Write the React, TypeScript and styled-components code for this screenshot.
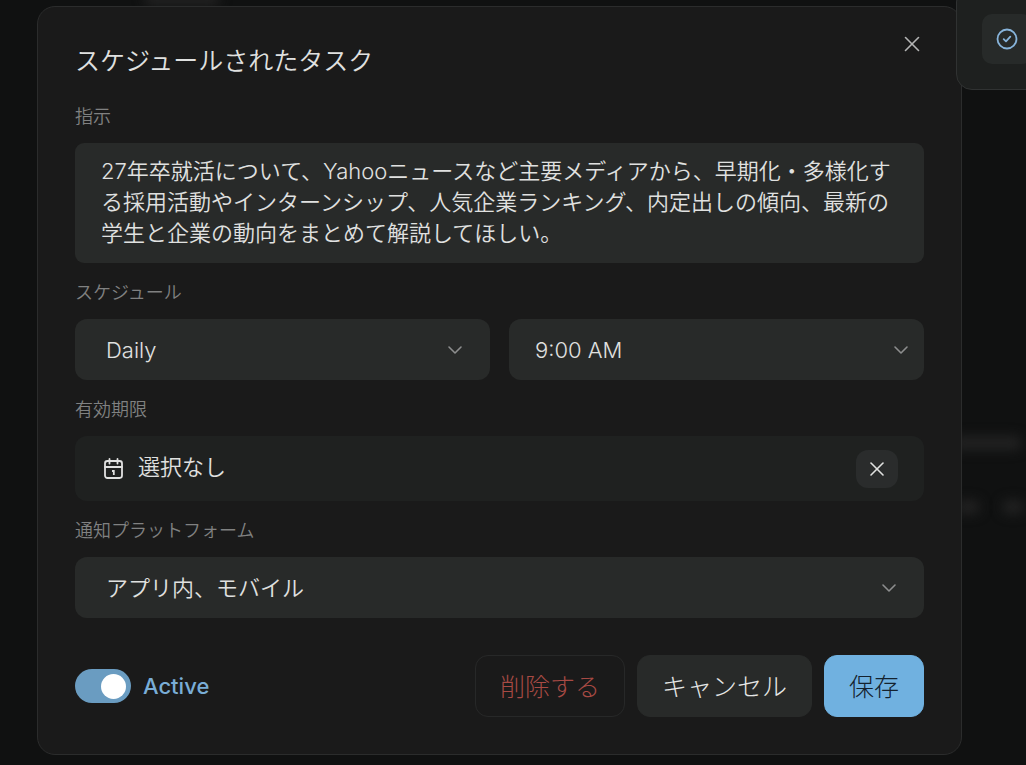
import React, { useState } from "react";
import styled, { createGlobalStyle } from "styled-components";
import { ChevronDown, X } from "lucide-react";

const GlobalStyle = createGlobalStyle`
  *, *::before, *::after { box-sizing: border-box; }
  body {
    margin: 0;
    background: #101111;
    color: #e0e1e0;
    font-family: Inter, "Noto Sans CJK JP", sans-serif;
    font-size: 22px;
    font-weight: 350;
  }
  button, select, textarea, input { font: inherit; color: inherit; }
`;

const Page = styled.div`
  position: relative;
  min-height: 100vh;
  overflow: hidden;
  padding: 6px 64px 10px 37px;
`;

const Ghost = styled.div<{ $top: number; $right: number; $width: number }>`
  position: absolute;
  top: ${(p) => p.$top}px;
  right: ${(p) => p.$right}px;
  width: ${(p) => p.$width}px;
  height: 14px;
  border-radius: 7px;
  background: #222222;
  filter: blur(6px);
`;

const Dialog = styled.form`
  position: relative;
  padding: 36px 37px 37px;
  border: 1px solid #2b2c2c;
  border-radius: 18px;
  background: #1a1a1a;
`;

const Header = styled.header`
  display: flex;
  align-items: flex-start;
  justify-content: space-between;
  margin-bottom: 24px;
`;

const Title = styled.h1`
  margin: 0;
  font-size: 25px;
  font-weight: 350;
  line-height: 36px;
`;

const CloseButton = styled.button`
  display: grid;
  place-items: center;
  width: 32px;
  height: 32px;
  margin: -15px -4px 0 0;
  padding: 0;
  border: 0;
  background: none;
  color: #b4b5b5;
`;

const Fields = styled.div`
  display: grid;
  gap: 16px;
`;

const Field = styled.div`
  display: grid;
  gap: 12px;
`;

const Label = styled.label`
  color: #808181;
  font-size: 18px;
  line-height: 28px;
`;

const Instructions = styled.textarea`
  display: block;
  width: 100%;
  height: 120px;
  padding: 13px 26px;
  border: 0;
  border-radius: 9px;
  outline: 0;
  resize: none;
  overflow: hidden;
  background: #282a29;
  line-height: 31px;
`;

const Columns = styled.div`
  display: grid;
  grid-template-columns: 1fr 1fr;
  gap: 19px;
`;

const SelectBox = styled.div<{ $inset: number; $iconInset: number }>`
  display: grid;
  grid-template-columns: 1fr auto;
  align-items: center;

  select {
    grid-area: 1 / 1 / 2 / 3;
    width: 100%;
    height: 61px;
    padding: 0 ${(p) => p.$inset}px;
    border: 0;
    border-radius: 12px;
    outline: 0;
    appearance: none;
    background: #282a29;
  }

  svg {
    grid-area: 1 / 2;
    margin-right: ${(p) => p.$iconInset}px;
    color: #8d8e8e;
    pointer-events: none;
  }
`;

const DateBox = styled.div`
  display: flex;
  align-items: center;
  justify-content: space-between;
  height: 65px;
  padding: 0 26px 0 29px;
  border-radius: 12px;
  background: #1f2120;
`;

const DateButton = styled.button`
  display: flex;
  align-items: center;
  gap: 15px;
  padding: 0;
  border: 0;
  background: none;
  line-height: 30px;

  span {
    padding-bottom: 3px;
  }
`;

const ClearButton = styled.button`
  display: grid;
  place-items: center;
  width: 42px;
  height: 38px;
  padding: 0;
  border: 0;
  border-radius: 12px;
  background: #2a2c2c;
`;

const Footer = styled.footer`
  display: flex;
  align-items: center;
  justify-content: space-between;
  margin-top: 37px;
`;

const SwitchLabel = styled.label`
  display: flex;
  align-items: center;
  gap: 12px;
  color: #79add6;
  font-weight: 450;
`;

const Switch = styled.input`
  display: flex;
  align-items: center;
  width: 56px;
  height: 34px;
  margin: 0;
  padding: 0 5px;
  border-radius: 17px;
  appearance: none;
  background: #3a3c3c;

  &::before {
    content: "";
    width: 25px;
    height: 25px;
    border-radius: 50%;
    background: #fff;
  }

  &:checked {
    justify-content: flex-end;
    background: #6a9cc1;
  }
`;

const Actions = styled.div`
  display: flex;
  gap: 12px;
`;

const tones = {
  danger: "color: #a84a44; background: none; border-color: #272828;",
  neutral: "color: #e6e7e6; background: #282a29; border-color: #282a29;",
  primary: "color: #14222e; background: #70b1e0; border-color: #70b1e0;",
};

const ActionButton = styled.button<{ $tone: keyof typeof tones }>`
  height: 62px;
  padding: 0 24px 3px;
  border: 1px solid;
  border-radius: 13px;
  font-size: 25px;
  font-weight: 300;
  ${(p) => tones[p.$tone]}
`;

const CornerPanel = styled.aside`
  position: absolute;
  top: -14px;
  right: -20px;
  padding: 27px 13px 25px 25px;
  border: 1px solid #303232;
  border-radius: 16px;
  background: #1e201f;
`;

const CornerButton = styled.button`
  display: grid;
  place-items: center;
  width: 50px;
  height: 50px;
  padding: 0;
  border: 0;
  border-radius: 10px;
  background: #272a29;
  color: #87b4db;
`;

function CalendarIcon() {
  return (
    <svg width="19" height="21" viewBox="0 0 19 21" fill="none" stroke="currentColor" strokeWidth="1.8" strokeLinecap="round" strokeLinejoin="round" aria-hidden="true">
      <rect x="1" y="3" width="17" height="17" rx="2.4" />
      <path d="M1 9h17M5.5 1v4.5M13.5 1v4.5" />
      <path d="M8 13h1.8v4" strokeWidth="1.8" strokeLinecap="butt" strokeLinejoin="miter" />
    </svg>
  );
}

function CheckCircleIcon() {
  return (
    <svg width="22" height="22" viewBox="0 0 22 22" fill="none" stroke="currentColor" strokeWidth="1.8" strokeLinecap="round" strokeLinejoin="round" aria-hidden="true">
      <circle cx="11" cy="11" r="9.5" />
      <path d="M7.7 11.2l2.3 2.2 4.3-4.7" />
    </svg>
  );
}

interface SelectFieldProps {
  id: string;
  name?: string;
  options: string[];
  inset?: number;
  iconInset?: number;
}

function SelectField({ id, name, options, inset = 31, iconInset = 23 }: SelectFieldProps) {
  return (
    <SelectBox $inset={inset} $iconInset={iconInset}>
      <select id={id} aria-label={name}>
        {options.map((option) => (
          <option key={option}>{option}</option>
        ))}
      </select>
      <ChevronDown size={24} strokeWidth={1.6} aria-hidden="true" />
    </SelectBox>
  );
}

const prompt =
  "27年卒就活について、Yahooニュースなど主要メディアから、早期化・多様化する採用活動やインターンシップ、人気企業ランキング、内定出しの傾向、最新の学生と企業の動向をまとめて解説してほしい。";

export default function App() {
  const [active, setActive] = useState(true);

  return (
    <Page>
      <GlobalStyle />
      <Ghost $top={-8} $right={806} $width={76} />
      <Ghost $top={436} $right={4} $width={70} />
      <Ghost $top={500} $right={46} $width={24} />
      <Ghost $top={500} $right={2} $width={22} />
      <Dialog role="dialog" aria-labelledby="dialog-title" onSubmit={(e) => e.preventDefault()}>
        <Header>
          <Title id="dialog-title">スケジュールされたタスク</Title>
          <CloseButton type="button" aria-label="閉じる">
            <X size={26} strokeWidth={1.5} />
          </CloseButton>
        </Header>
        <Fields>
          <Field>
            <Label htmlFor="instructions">指示</Label>
            <Instructions id="instructions" spellCheck={false} defaultValue={prompt} />
          </Field>
          <Field>
            <Label htmlFor="frequency">スケジュール</Label>
            <Columns>
              <SelectField id="frequency" options={["Daily"]} />
              <SelectField id="time" name="時刻" options={["9:00 AM"]} inset={26} iconInset={11} />
            </Columns>
          </Field>
          <Field>
            <Label htmlFor="expiry">有効期限</Label>
            <DateBox>
              <DateButton id="expiry" type="button">
                <CalendarIcon />
                <span>選択なし</span>
              </DateButton>
              <ClearButton type="button" aria-label="クリア">
                <X size={24} strokeWidth={1.6} />
              </ClearButton>
            </DateBox>
          </Field>
          <Field>
            <Label htmlFor="platforms">通知プラットフォーム</Label>
            <SelectField id="platforms" options={["アプリ内、モバイル"]} />
          </Field>
        </Fields>
        <Footer>
          <SwitchLabel>
            <Switch type="checkbox" role="switch" checked={active} onChange={(e) => setActive(e.target.checked)} />
            Active
          </SwitchLabel>
          <Actions>
            <ActionButton type="button" $tone="danger">削除する</ActionButton>
            <ActionButton type="button" $tone="neutral">キャンセル</ActionButton>
            <ActionButton type="submit" $tone="primary">保存</ActionButton>
          </Actions>
        </Footer>
      </Dialog>
      <CornerPanel>
        <CornerButton type="button" aria-label="完了">
          <CheckCircleIcon />
        </CornerButton>
      </CornerPanel>
    </Page>
  );
}
